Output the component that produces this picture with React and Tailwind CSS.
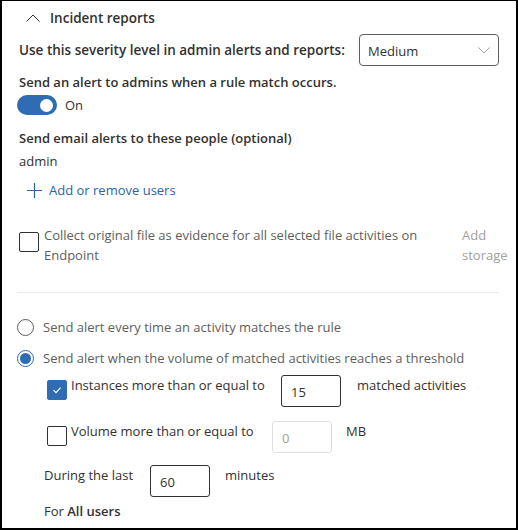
import React from 'react';

const Checkbox = ({ checked }) => (
    <div
        className={`w-5 h-5 shrink-0 rounded-[2px] border flex items-center justify-center ${
            checked ? 'bg-[#2f6cb3] border-[#2f6cb3]' : 'bg-white border-[#323130]'
        }`}>
        {checked && (
            <svg width="12" height="12" viewBox="0 0 12 12" fill="none">
                <path d="M2.5 6.2 L5 8.6 L9.6 3.6" stroke="white" strokeWidth="1.1" />
            </svg>
        )}
    </div>
);

const Radio = ({ checked }) => (
    <div
        className={`w-[17px] h-[17px] shrink-0 rounded-full border flex items-center justify-center ${
            checked ? 'border-[#2f6cb3]' : 'border-[#605e5c]'
        }`}>
        {checked && <div className="w-[11px] h-[11px] rounded-full bg-[#2f6cb3]" />}
    </div>
);

const NumberBox = ({ value, disabled, className = '' }) => (
    <div
        className={`h-8 w-[60px] shrink-0 rounded-[3px] border flex items-center pl-[9px] pt-[2px] ${
            disabled ? 'border-[#e1dfdd] text-[#a19f9d]' : 'border-[#323130] text-[#323130]'
        } ${className}`}>
        {value}
    </div>
);

export default function App() {
    return (
        <div
            className="w-[518px] h-[530px] border-2 border-t border-black bg-white text-[#323130] text-[13px] leading-5 overflow-hidden"
            style={{ fontFamily: '"Segoe UI", "Open Sans", Arial, sans-serif' }}>
            <div className="pl-[15px] pr-[17px]">
                {/* section header */}
                <div className="flex items-center h-[33px] pl-[9px] gap-[10px]">
                    <svg width="14" height="8" viewBox="0 0 14 8" fill="none">
                        <path d="M0.5 7.5 L7 1 L13.5 7.5" stroke="#323130" strokeWidth="1" />
                    </svg>
                    <span className="font-semibold text-[13.5px]">Incident reports</span>
                </div>

                <div className="flex items-center justify-between h-[32px] pl-[2px]">
                    <span className="font-semibold text-[13.5px]">Use this severity level in admin alerts and reports:</span>
                    <div className="w-[140px] h-8 rounded-[4px] border border-[#605e5c] flex items-center justify-between pl-[8px] pr-[8px]">
                        <span className="pt-[2px]">Medium</span>
                        <svg width="12" height="7" viewBox="0 0 12 7" fill="none">
                            <path d="M0.5 0.5 L6 6 L11.5 0.5" stroke="#a19f9d" strokeWidth="1" />
                        </svg>
                    </div>
                </div>

                <div className="pl-[2px] mt-[6px] h-5 font-semibold">Send an alert to admins when a rule match occurs.</div>

                <div className="flex items-center gap-2 mt-[3px] h-5">
                    <div className="w-10 h-5 rounded-full bg-[#2f6cb3] flex items-center justify-end pr-[4px]">
                        <div className="w-[13px] h-[13px] rounded-full bg-white" />
                    </div>
                    <span>On</span>
                </div>

                <div className="pl-[2px] mt-[13px] h-5 font-semibold">Send email alerts to these people (optional)</div>
                <div className="pl-[2px] mt-[3px] h-5">admin</div>

                <div className="flex items-center gap-[7px] pl-[10px] mt-[9px] h-5 text-[#2b63a8]">
                    <svg width="15" height="15" viewBox="0 0 15 15" fill="none">
                        <path d="M7.5 0 V15 M0 7.5 H15" stroke="#2b63a8" strokeWidth="1.2" />
                    </svg>
                    <span>Add or remove users</span>
                </div>

                <div className="flex mt-[25px] pl-[2px] -mr-[12px]">
                    <div className="pt-[7px]">
                        <Checkbox />
                    </div>
                    <div className="ml-[5px] w-[395px] shrink-0 text-[#605e5c]">
                        Collect original file as evidence for all selected file activities on Endpoint
                    </div>
                    <div className="ml-[23px] shrink-0 text-[#a19f9d]">
                        Add
                        <br />
                        storage
                    </div>
                </div>

                <div className="mt-[27px] border-t border-[#edebe9]" />

                <div className="flex items-center gap-[9px] mt-[24px] h-5 text-[#605e5c]">
                    <Radio />
                    <span>Send alert every time an activity matches the rule</span>
                </div>
                <div className="flex items-center gap-[9px] mt-[11px] h-5 text-[#605e5c]">
                    <Radio checked />
                    <span>Send alert when the volume of matched activities reaches a threshold</span>
                </div>

                <div className="pl-[30px]">
                    <div className="flex items-start mt-[7px]">
                        <div className="pt-[5px]">
                            <Checkbox checked />
                        </div>
                        <span className="ml-[4px] w-[210px]">Instances more than or equal to</span>
                        <NumberBox value="15" />
                        <span className="ml-[16px]">matched activities</span>
                    </div>

                    <div className="flex items-start mt-[14px]">
                        <div className="pt-[5px]">
                            <Checkbox />
                        </div>
                        <span className="ml-[4px] w-[201px]">Volume more than or equal to</span>
                        <NumberBox value="0" disabled className="w-[59px]" />
                        <span className="ml-[14px]">MB</span>
                    </div>

                    <div className="flex items-start mt-[12px] -ml-[3px]">
                        <span className="w-[106px]">During the last</span>
                        <NumberBox value="60" />
                        <span className="ml-[15px]">minutes</span>
                    </div>

                    <div className="mt-[4px] -ml-[3px]">
                        For <span className="font-semibold">All users</span>
                    </div>
                </div>
            </div>
        </div>
    );
}
